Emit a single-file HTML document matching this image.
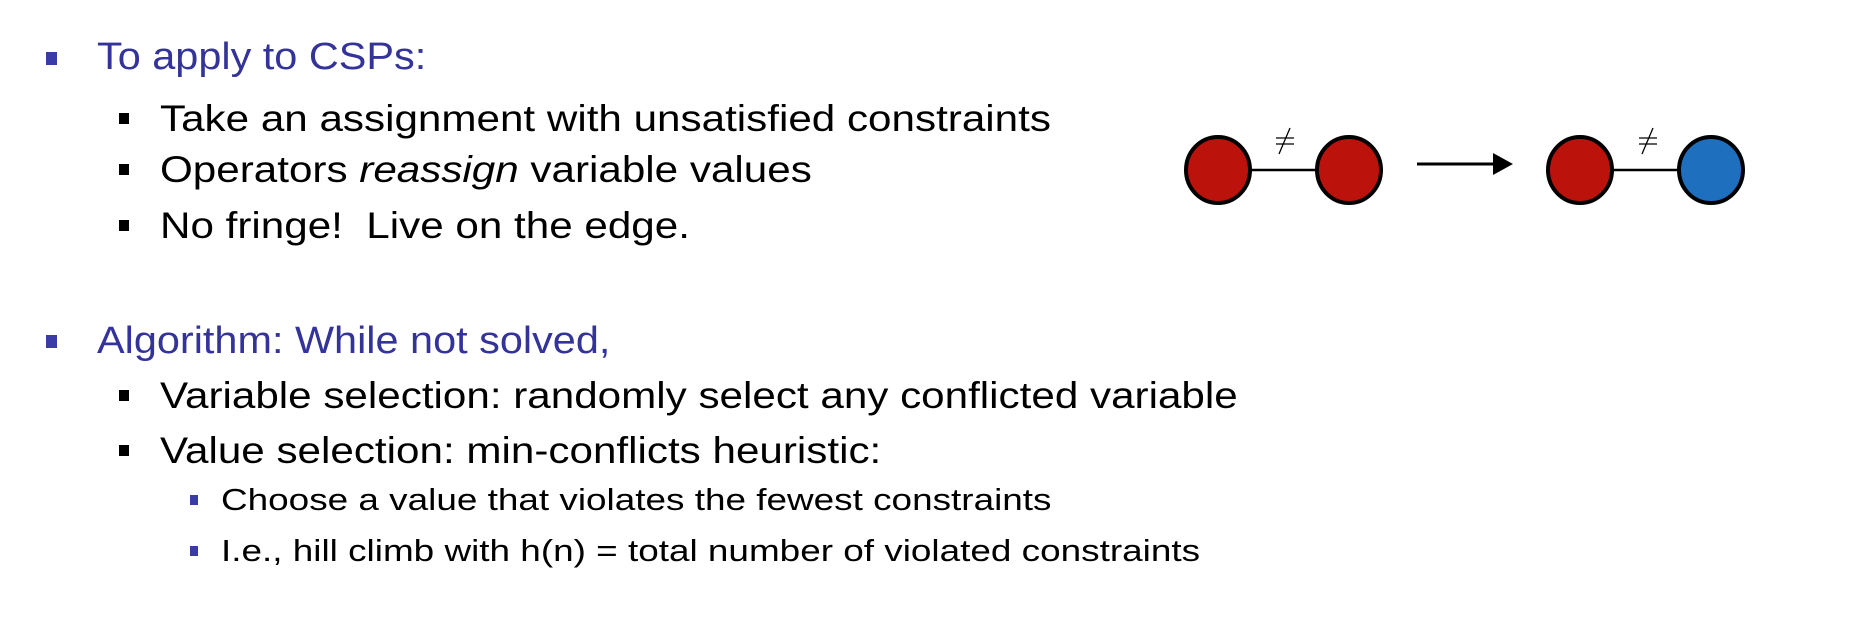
<!DOCTYPE html>
<html><head><meta charset="utf-8"><style>
body{margin:0;width:1855px;height:634px;background:#fff;position:relative;overflow:hidden;font-family:"Liberation Sans",sans-serif}
.t{position:absolute;white-space:nowrap;line-height:1;transform-origin:left}
.l1{font-size:38px;color:#33339a;left:97px;transform:scaleX(1.09)}
.l2{font-size:37px;color:#000;left:160px;transform:scaleX(1.14)}
.l3{font-size:31px;color:#000;left:221px;transform:scaleX(1.19)}
.b{position:absolute}
.b1{width:11px;height:13px;background:#3b3ba8;left:46px}
.b2{width:10px;height:11px;background:#000;left:119px}
.b3{width:8px;height:10px;background:#3b3ba8;left:190px}
</style></head><body>
<div class="b b1" style="top:52px"></div><div class="t l1" style="top:38px">To apply to CSPs:</div>
<div class="b b2" style="top:113px"></div><div class="t l2" style="top:100px">Take an assignment with unsatisfied constraints</div>
<div class="b b2" style="top:164px"></div><div class="t l2" style="top:151px">Operators <i>reassign</i> variable values</div>
<div class="b b2" style="top:220px"></div><div class="t l2" style="top:207px">No fringe!&nbsp; Live on the edge.</div>
<div class="b b1" style="top:335px"></div><div class="t l1" style="top:322px">Algorithm: While not solved,</div>
<div class="b b2" style="top:390px"></div><div class="t l2" style="top:377px">Variable selection: randomly select any conflicted variable</div>
<div class="b b2" style="top:445px"></div><div class="t l2" style="top:432px">Value selection: min-conflicts heuristic:</div>
<div class="b b3" style="top:495px"></div><div class="t l3" style="top:484px">Choose a value that violates the fewest constraints</div>
<div class="b b3" style="top:546px"></div><div class="t l3" style="top:535px">I.e., hill climb with h(n) = total number of violated constraints</div>
<svg width="1855" height="634" style="position:absolute;left:0;top:0">
<g stroke="#000">
<line x1="1250" y1="170" x2="1318" y2="170" stroke-width="2.5"/>
<line x1="1612" y1="170" x2="1680" y2="170" stroke-width="2.5"/>
<ellipse cx="1218" cy="170" rx="32" ry="33" fill="#bc120c" stroke-width="4"/>
<ellipse cx="1349" cy="170" rx="32" ry="33" fill="#bc120c" stroke-width="4"/>
<ellipse cx="1580" cy="170" rx="32" ry="33" fill="#bc120c" stroke-width="4"/>
<ellipse cx="1711" cy="170" rx="32" ry="33" fill="#1f6fbf" stroke-width="4"/>
<line x1="1417" y1="164" x2="1495" y2="164" stroke-width="3"/>
<g stroke-width="1.3"><line x1="1276" y1="138" x2="1294" y2="138"/><line x1="1276" y1="144" x2="1294" y2="144"/><line x1="1290" y1="128" x2="1279" y2="154"/>
<line x1="1639" y1="138" x2="1657" y2="138"/><line x1="1639" y1="144" x2="1657" y2="144"/><line x1="1653" y1="128" x2="1642" y2="154"/></g>
</g>
<polygon points="1493,153 1513,164 1493,175" fill="#000"/>
</svg>
</body></html>
